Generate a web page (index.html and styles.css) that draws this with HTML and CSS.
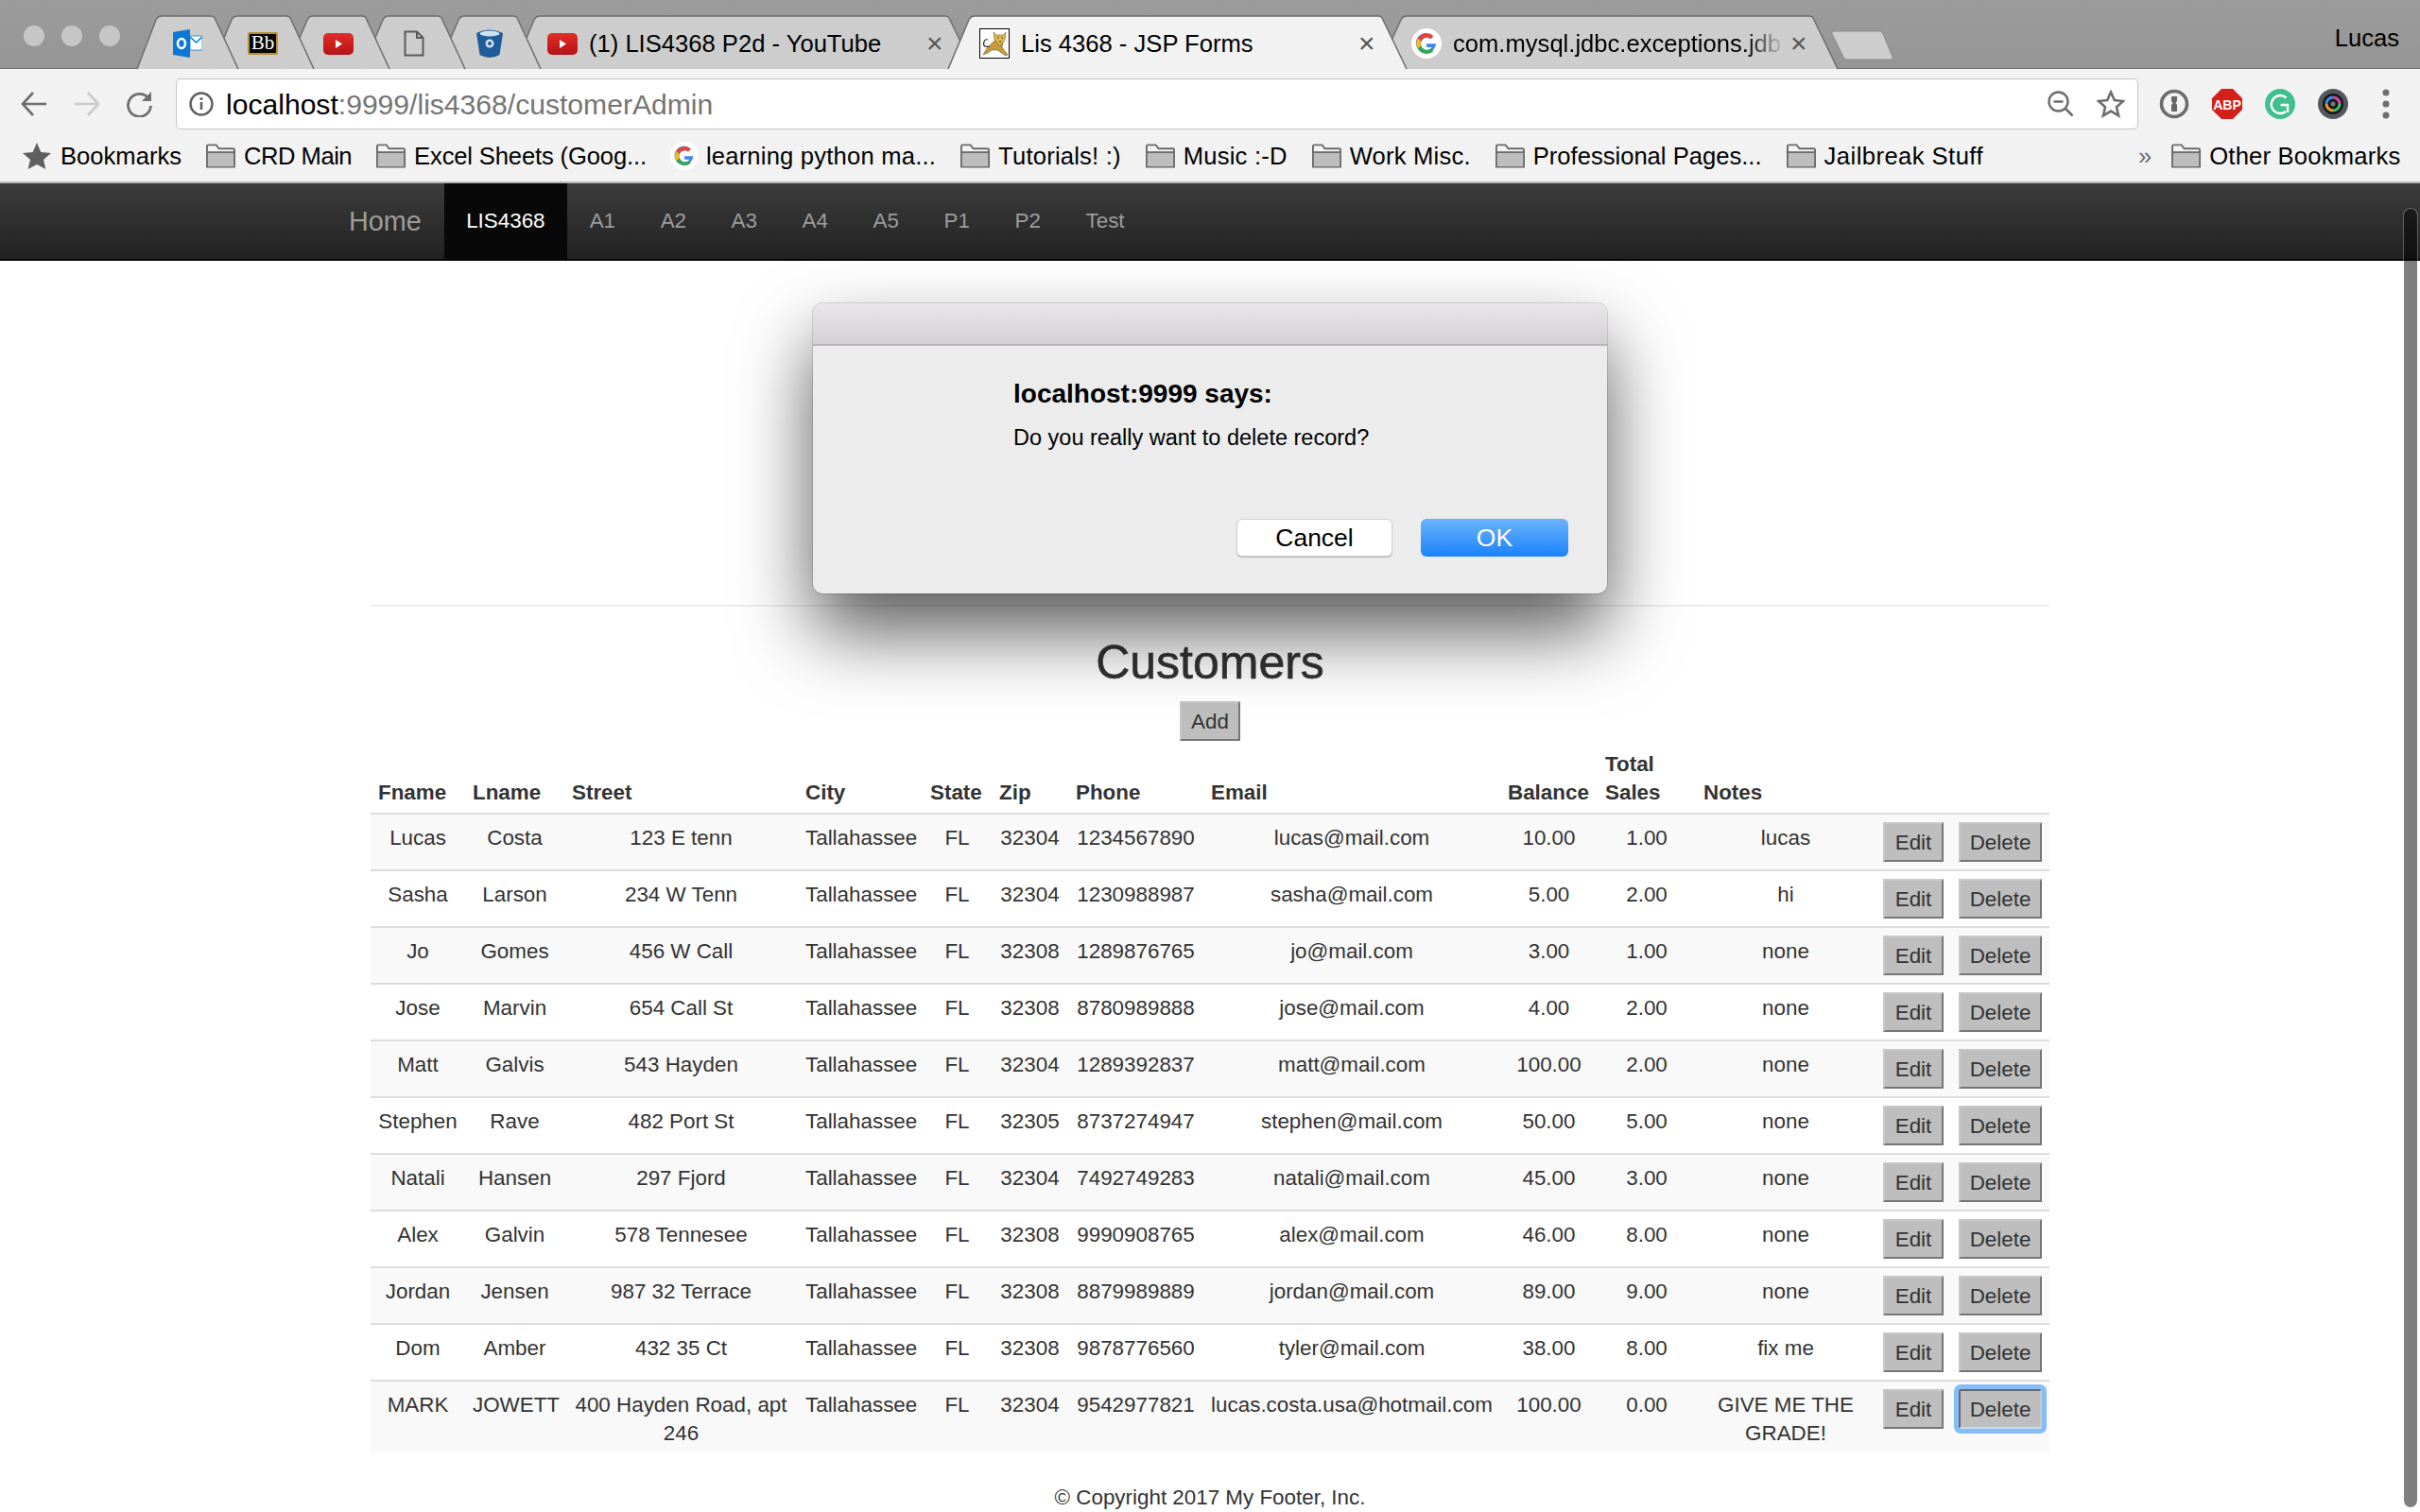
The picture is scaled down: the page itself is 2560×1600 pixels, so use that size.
FILE: index.html
```html
<!DOCTYPE html>
<html lang="en">
<head>
    <meta charset="UTF-8">
    <title>Lis 4368 - JSP Forms</title>
    <link rel="stylesheet" href="styles.css">
</head>
<body>
    <!-- shared icons -->
    <svg class="sprite" width="0" height="0">
        <defs>
            <linearGradient id="yt-red" x1="0" y1="0" x2="0" y2="1">
                <stop offset="0" stop-color="#e52d27"/>
                <stop offset="1" stop-color="#b31217"/>
            </linearGradient>
        </defs>
        <symbol id="folder" viewBox="0 0 32 26">
            <path d="M1 25V2.500Q1 1 2.500 1H11l3 4h15.500Q31 5 31 6.500V25Z" fill="#f4f4f4" stroke="#6b6b6b" stroke-width="2"/>
            <path d="M2 10h28v14H2Z" fill="#bdbdbd"/>
            <path d="M1 9h30" stroke="#6b6b6b" stroke-width="2"/>
        </symbol>
        <symbol id="youtube" viewBox="0 0 32 23">
            <rect width="32" height="23" rx="5" fill="url(#yt-red)"/>
            <path d="M13 7l7 4.500-7 4.500Z" fill="#fff"/>
        </symbol>
        <symbol id="google" viewBox="0 0 32 32">
            <circle cx="16" cy="16" r="16" fill="#fff"/>
            <path d="M26 16.200H16v3.800h5.800A6.400 6.400 0 1 1 20.300 11.200l2.900-2.900A10.600 10.600 0 1 0 26 16.200Z" fill="#4285f4"/>
            <path d="M6.800 10.700A10.600 10.600 0 0 1 23.200 8.300L20.300 11.200A6.400 6.400 0 0 0 10.100 13.800Z" fill="#ea4335"/>
            <path d="M6.800 10.700L10.100 13.800A6.400 6.400 0 0 0 10.100 18.800L6.800 21.300A10.600 10.600 0 0 1 6.800 10.700Z" fill="#fbbc05"/>
            <path d="M6.800 21.300L10.100 18.800A6.400 6.400 0 0 0 20.400 21.500L23.400 24A10.600 10.600 0 0 1 6.800 21.300Z" fill="#34a853"/>
        </symbol>
    </svg>

    <!-- tab strip -->
    <div class="tabstrip">
        <svg class="tab-shapes" width="2560" height="74" viewBox="0 0 2560 74">
            <path class="shape-new" d="M1941 33H1988Q1991 33 1992 36L2002 60Q2003 63 2000 63H1953Q1951 63 1950 60L1938 36Q1937 33 1941 33Z"/>
            <path class="shape" d="M1458 73L1482 21Q1484 17 1488 17H1914Q1918 17 1919 21L1944 73"/>
            <path class="shape" d="M543 73L565 21Q567 17 571 17H1000Q1004 17 1005 21L1030 73"/>
            <path class="shape" d="M463 73L485 21Q487 17 491 17H543Q547 17 548 21L572 73"/>
            <path class="shape" d="M383 73L405 21Q407 17 411 17H463Q467 17 468 21L492 73"/>
            <path class="shape" d="M303 73L325 21Q327 17 331 17H383Q387 17 388 21L412 73"/>
            <path class="shape" d="M223 73L245 21Q247 17 251 17H303Q307 17 308 21L332 73"/>
            <path class="shape" d="M145 73L165 21Q167 17 171 17H223Q227 17 228 21L252 73"/>
            <path class="shape shape-active" d="M1003 73L1025 21Q1027 17 1031 17H1458Q1462 17 1463 21L1488 73"/>
        </svg>
        <div class="traffic">
            <span class="dot"></span><span class="dot"></span><span class="dot"></span>
        </div>
        <div class="tabs">
            <div class="tab-pin">
                <svg class="fav-outlook" viewBox="0 0 31 30">
                    <path d="M18 7h13v15H18Z" fill="#fff" stroke="#0a78d4" stroke-width="0.800"/>
                    <path d="M18 8l6.500 6L31 8" fill="none" stroke="#0a78d4" stroke-width="1.500"/>
                    <path d="M0 3L18 0V30L0 27Z" fill="#0a78d4"/>
                    <ellipse cx="9" cy="15" rx="4" ry="5" fill="none" stroke="#fff" stroke-width="2.600"/>
                </svg>
            </div>
            <div class="tab-pin"><span class="fav-bb">Bb</span></div>
            <div class="tab-pin"><svg class="fav-yt"><use href="#youtube"/></svg></div>
            <div class="tab-pin">
                <svg class="fav-doc" viewBox="0 0 22 28">
                    <path d="M1.500 1.500H14L20.500 8V26.500H1.500Z" fill="none" stroke="#5a5a5a" stroke-width="2"/>
                    <path d="M14 1.500V8H20.500" fill="none" stroke="#5a5a5a" stroke-width="2"/>
                </svg>
            </div>
            <div class="tab-pin">
                <svg class="fav-bucket" viewBox="0 0 28 32">
                    <path d="M0 5Q14 -2 28 5L24.500 28Q14 34 3.500 28Z" fill="#1f5c99"/>
                    <ellipse cx="14" cy="5.500" rx="10.500" ry="3" fill="#cfe0ef"/>
                    <circle cx="14" cy="16" r="4.500" fill="#cfe0ef"/>
                    <circle cx="14" cy="16" r="2" fill="#1f5c99"/>
                </svg>
            </div>
            <div class="tab-wide">
                <svg class="fav-yt"><use href="#youtube"/></svg>
                <span class="tab-title">(1) LIS4368 P2d - YouTube</span>
                <span class="tab-close">×</span>
            </div>
            <div class="tab-wide">
                <svg class="fav-cat" viewBox="0 0 32 32">
                    <rect x="0.500" y="0.500" width="31" height="31" fill="#fff" stroke="#000"/>
                    <path d="M16 13L8 21 4 28 9 26 13 23 19 23 28 29 30 28 24 20 25 14Z" fill="#c99a3a" stroke="#5a4a20" stroke-width="0.500"/>
                    <path d="M15 4L18 7H25L28 4 27 12 22 19 16 12Z" fill="#e0b84e" stroke="#5a4a20" stroke-width="0.500"/>
                    <path d="M19 10h1.500M23.500 10H25M21 14h2" stroke="#333" stroke-width="1.200"/>
                    <path d="M11 19Q3 21 5 14 6 11 9 12" fill="none" stroke="#222" stroke-width="1.200"/>
                </svg>
                <span class="tab-title">Lis 4368 - JSP Forms</span>
                <span class="tab-close">×</span>
            </div>
            <div class="tab-wide">
                <svg class="fav-google"><use href="#google"/></svg>
                <span class="tab-title tab-fade">com.mysql.jdbc.exceptions.jdb</span>
                <span class="tab-close">×</span>
            </div>
        </div>
        <span class="profile">Lucas</span>
    </div>

    <!-- address bar -->
    <div class="toolbar">
        <span class="tool-btn">
            <svg class="tool-icon" viewBox="0 0 30 28"><path d="M28 14H3M14 2L3 14 14 26" fill="none" stroke="#6e6e6e" stroke-width="2.600"/></svg>
        </span>
        <span class="tool-btn">
            <svg class="tool-icon" viewBox="0 0 30 28"><path d="M2 14H27M16 2L27 14 16 26" fill="none" stroke="#cbcbcb" stroke-width="2.600"/></svg>
        </span>
        <span class="tool-btn">
            <svg class="tool-icon" viewBox="0 0 30 28"><path d="M24 8A12 12 0 1 0 26.500 16" fill="none" stroke="#6e6e6e" stroke-width="2.800"/><path d="M27 1V11H17Z" fill="#6e6e6e"/></svg>
        </span>
        <div class="omnibox">
            <svg class="omni-info" viewBox="0 0 26 26">
                <circle cx="13" cy="13" r="11.500" fill="none" stroke="#5f5f5f" stroke-width="2.400"/>
                <path d="M13 11v8" stroke="#5f5f5f" stroke-width="2.600"/>
                <circle cx="13" cy="7.500" r="1.600" fill="#5f5f5f"/>
            </svg>
            <span class="url"><span class="url-host">localhost</span>:9999/lis4368/customerAdmin</span>
            <svg class="omni-zoom" viewBox="0 0 28 28">
                <circle cx="11.500" cy="11.500" r="10" fill="none" stroke="#6e6e6e" stroke-width="2.400"/>
                <path d="M6.500 11.500h10M18.500 18.500l8 8" stroke="#6e6e6e" stroke-width="2.600"/>
            </svg>
            <svg class="omni-star" viewBox="0 0 30 30">
                <path d="M15 2.500l3.800 8.600 9.200.9-7 6.200 2.100 9.200L15 22.600 6.900 27.400 9 18.200 2 12l9.200-.9Z" fill="none" stroke="#6e6e6e" stroke-width="2.600"/>
            </svg>
        </div>
        <div class="extensions">
            <span class="tool-btn">
                <svg class="ext-icon" viewBox="0 0 32 32">
                    <circle cx="16" cy="16" r="13.500" fill="#f2f2f2" stroke="#6b6b6b" stroke-width="3.600"/>
                    <path d="M13 8h6v5l-1.500 2 1.500 2v7h-6v-7l1.500-2-1.500-2Z" fill="#666"/>
                </svg>
            </span>
            <span class="tool-btn">
                <svg class="ext-icon" viewBox="0 0 32 32">
                    <path d="M10 0H22L32 10V22L22 32H10L0 22V10Z" fill="#d4201a"/>
                    <text class="abp-text" x="16" y="21.500" text-anchor="middle">ABP</text>
                </svg>
            </span>
            <span class="tool-btn">
                <svg class="ext-icon" viewBox="0 0 32 32">
                    <circle cx="16" cy="16" r="16" fill="#41bf8f"/>
                    <path d="M22.500 9.500A9.500 9.500 0 1 0 22 24" fill="none" stroke="#fff" stroke-width="2.400"/>
                    <path d="M16.500 17H24V25" fill="none" stroke="#fff" stroke-width="2.400"/>
                </svg>
            </span>
            <span class="tool-btn">
                <svg class="ext-icon" viewBox="0 0 32 32">
                    <circle cx="16" cy="16" r="16" fill="#54575f"/>
                    <circle cx="16" cy="16" r="11" fill="#16181c"/>
                    <circle cx="16" cy="16" r="7" fill="none" stroke="#3ec46d" stroke-width="3" stroke-dasharray="11 33"/>
                    <circle cx="16" cy="16" r="7" fill="none" stroke="#d84aa8" stroke-width="3" stroke-dasharray="11 33" stroke-dashoffset="11"/>
                    <circle cx="16" cy="16" r="7" fill="none" stroke="#3f8fe0" stroke-width="3" stroke-dasharray="11 33" stroke-dashoffset="22"/>
                    <circle cx="16" cy="16" r="7" fill="none" stroke="#e8a030" stroke-width="3" stroke-dasharray="11 33" stroke-dashoffset="33"/>
                    <circle cx="16" cy="16" r="2.500" fill="#777"/>
                </svg>
            </span>
            <span class="tool-btn">
                <svg class="menu-icon" viewBox="0 0 8 32"><circle cx="4" cy="4" r="3.500" fill="#6e6e6e"/><circle cx="4" cy="16" r="3.500" fill="#6e6e6e"/><circle cx="4" cy="28" r="3.500" fill="#6e6e6e"/></svg>
            </span>
        </div>
    </div>

    <!-- bookmarks -->
    <div class="bookmarks">
        <span class="bm bm-first">
            <svg class="bm-star" viewBox="0 0 30 28"><path d="M15 0l4.300 10 10.700 1-8 7.100 2.400 9.900L15 23l-9.400 5L8 18.100 0 11l10.700-1Z" fill="#5f5f5f"/></svg>
            Bookmarks
        </span>
        <span class="bm bm-crd"><svg class="folder"><use href="#folder"/></svg>CRD Main</span>
        <span class="bm bm-excel"><svg class="folder"><use href="#folder"/></svg>Excel Sheets (Goog...</span>
        <span class="bm bm-wide"><svg class="bm-google"><use href="#google"/></svg>learning python ma...</span>
        <span class="bm bm-wide"><svg class="folder"><use href="#folder"/></svg>Tutorials! :)</span>
        <span class="bm bm-wide"><svg class="folder"><use href="#folder"/></svg>Music :-D</span>
        <span class="bm bm-wide"><svg class="folder"><use href="#folder"/></svg>Work Misc.</span>
        <span class="bm"><svg class="folder"><use href="#folder"/></svg>Professional Pages...</span>
        <span class="bm bm-jail"><svg class="folder"><use href="#folder"/></svg>Jailbreak Stuff</span>
        <span class="bm-more">»</span>
        <span class="bm bm-wide"><svg class="folder"><use href="#folder"/></svg>Other Bookmarks</span>
    </div>

    <!-- site navbar -->
    <nav class="navbar">
        <a class="brand">Home</a>
        <a class="nav-link active">LIS4368</a>
        <a class="nav-link">A1</a>
        <a class="nav-link">A2</a>
        <a class="nav-link">A3</a>
        <a class="nav-link">A4</a>
        <a class="nav-link">A5</a>
        <a class="nav-link">P1</a>
        <a class="nav-link">P2</a>
        <a class="nav-link">Test</a>
    </nav>

    <div class="container">
        <hr class="rule">
        <h2 class="title">Customers</h2>
        <div class="add-row"><button class="btn">Add</button></div>

        <table class="customers">
            <colgroup>
                <col class="c-fname"><col class="c-lname"><col class="c-street"><col class="c-city">
                <col class="c-state"><col class="c-zip"><col class="c-phone"><col class="c-email">
                <col class="c-balance"><col class="c-sales"><col class="c-notes"><col class="c-edit"><col class="c-delete">
            </colgroup>
            <thead>
                <tr>
                    <th>Fname</th><th>Lname</th><th>Street</th><th>City</th><th>State</th><th>Zip</th><th>Phone</th>
                    <th>Email</th><th>Balance</th><th>Total Sales</th><th>Notes</th><th></th><th></th>
                </tr>
            </thead>
            <tbody>
                <tr>
                    <td>Lucas</td><td>Costa</td><td>123 E tenn</td><td>Tallahassee</td><td>FL</td><td>32304</td><td>1234567890</td>
                    <td>lucas@mail.com</td><td>10.00</td><td>1.00</td><td>lucas</td>
                    <td><button class="btn">Edit</button></td><td><button class="btn">Delete</button></td>
                </tr>
                <tr>
                    <td>Sasha</td><td>Larson</td><td>234 W Tenn</td><td>Tallahassee</td><td>FL</td><td>32304</td><td>1230988987</td>
                    <td>sasha@mail.com</td><td>5.00</td><td>2.00</td><td>hi</td>
                    <td><button class="btn">Edit</button></td><td><button class="btn">Delete</button></td>
                </tr>
                <tr>
                    <td>Jo</td><td>Gomes</td><td>456 W Call</td><td>Tallahassee</td><td>FL</td><td>32308</td><td>1289876765</td>
                    <td>jo@mail.com</td><td>3.00</td><td>1.00</td><td>none</td>
                    <td><button class="btn">Edit</button></td><td><button class="btn">Delete</button></td>
                </tr>
                <tr>
                    <td>Jose</td><td>Marvin</td><td>654 Call St</td><td>Tallahassee</td><td>FL</td><td>32308</td><td>8780989888</td>
                    <td>jose@mail.com</td><td>4.00</td><td>2.00</td><td>none</td>
                    <td><button class="btn">Edit</button></td><td><button class="btn">Delete</button></td>
                </tr>
                <tr>
                    <td>Matt</td><td>Galvis</td><td>543 Hayden</td><td>Tallahassee</td><td>FL</td><td>32304</td><td>1289392837</td>
                    <td>matt@mail.com</td><td>100.00</td><td>2.00</td><td>none</td>
                    <td><button class="btn">Edit</button></td><td><button class="btn">Delete</button></td>
                </tr>
                <tr>
                    <td>Stephen</td><td>Rave</td><td>482 Port St</td><td>Tallahassee</td><td>FL</td><td>32305</td><td>8737274947</td>
                    <td>stephen@mail.com</td><td>50.00</td><td>5.00</td><td>none</td>
                    <td><button class="btn">Edit</button></td><td><button class="btn">Delete</button></td>
                </tr>
                <tr>
                    <td>Natali</td><td>Hansen</td><td>297 Fjord</td><td>Tallahassee</td><td>FL</td><td>32304</td><td>7492749283</td>
                    <td>natali@mail.com</td><td>45.00</td><td>3.00</td><td>none</td>
                    <td><button class="btn">Edit</button></td><td><button class="btn">Delete</button></td>
                </tr>
                <tr>
                    <td>Alex</td><td>Galvin</td><td>578 Tennesee</td><td>Tallahassee</td><td>FL</td><td>32308</td><td>9990908765</td>
                    <td>alex@mail.com</td><td>46.00</td><td>8.00</td><td>none</td>
                    <td><button class="btn">Edit</button></td><td><button class="btn">Delete</button></td>
                </tr>
                <tr>
                    <td>Jordan</td><td>Jensen</td><td>987 32 Terrace</td><td>Tallahassee</td><td>FL</td><td>32308</td><td>8879989889</td>
                    <td>jordan@mail.com</td><td>89.00</td><td>9.00</td><td>none</td>
                    <td><button class="btn">Edit</button></td><td><button class="btn">Delete</button></td>
                </tr>
                <tr>
                    <td>Dom</td><td>Amber</td><td>432 35 Ct</td><td>Tallahassee</td><td>FL</td><td>32308</td><td>9878776560</td>
                    <td>tyler@mail.com</td><td>38.00</td><td>8.00</td><td>fix me</td>
                    <td><button class="btn">Edit</button></td><td><button class="btn">Delete</button></td>
                </tr>
                <tr>
                    <td>MARK</td><td>JOWETT</td><td>400 Hayden Road, apt 246</td><td>Tallahassee</td><td>FL</td><td>32304</td><td>9542977821</td>
                    <td>lucas.costa.usa@hotmail.com</td><td>100.00</td><td>0.00</td><td>GIVE ME THE GRADE!</td>
                    <td><button class="btn">Edit</button></td><td><button class="btn btn-focus">Delete</button></td>
                </tr>
            </tbody>
        </table>

        <p class="footer">© Copyright 2017 My Footer, Inc.</p>
    </div>

    <!-- overlay scrollbar -->
    <div class="scroll-thumb"></div>

    <!-- javascript confirm dialog -->
    <div class="dialog">
        <div class="dialog-bar"></div>
        <div class="dialog-body">
            <h4 class="dialog-title">localhost:9999 says:</h4>
            <p class="dialog-msg">Do you really want to delete record?</p>
            <div class="dialog-actions">
                <button class="dlg-btn dlg-cancel">Cancel</button>
                <button class="dlg-btn dlg-ok">OK</button>
            </div>
        </div>
    </div>
</body>
</html>
```

FILE: styles.css
```css
* {
    box-sizing: border-box;
}
html, body {
    margin: 0;
    height: 1600px;
    overflow: hidden;
}
body {
    position: relative;
    background: #fff;
    font-family: "Liberation Sans", Arial, sans-serif;
    color: #333;
}
.sprite {
    position: absolute;
}

/* tab strip */
.tabstrip {
    position: relative;
    display: flex;
    height: 73px;
    background: linear-gradient(#9c9c9c, #959595);
    border-bottom: 1px solid #6e6e6e;
    font-size: 25.6px;
    color: #000;
}
.tab-shapes {
    position: absolute;
    left: 0;
    top: 0;
}
.shape {
    fill: #cdcdcd;
    stroke: #6e6e6e;
    stroke-width: 1.5;
}
.shape-active {
    fill: #f2f2f2;
}
.shape-new {
    fill: #cdcdcd;
    stroke: #8a8a8a;
    stroke-width: 1;
}
.traffic {
    position: relative;
    display: flex;
    gap: 18px;
    width: 158px;
    height: 72px;
    padding: 27px 0 0 25px;
}
.dot {
    width: 22px;
    height: 22px;
    border-radius: 50%;
    background: #c6c6c6;
}
.tabs {
    position: relative;
    display: flex;
    height: 72px;
    padding-top: 18px;
}
.tab-pin {
    display: flex;
    align-items: center;
    justify-content: center;
    width: 80px;
    height: 56px;
}
.tab-wide {
    display: flex;
    align-items: center;
    gap: 12px;
    width: 457px;
    height: 56px;
    padding: 0 19px 0 21px;
}
.fav-outlook {
    width: 31px;
    height: 30px;
}
.fav-bb {
    width: 32px;
    height: 24px;
    background: #050505;
    border: 2px solid #b8912f;
    border-radius: 2px;
    color: #fff;
    font-family: "Liberation Serif", serif;
    font-size: 21px;
    line-height: 19px;
    text-align: center;
}
.fav-yt {
    flex: none;
    width: 32px;
    height: 23px;
}
.fav-doc {
    width: 22px;
    height: 28px;
}
.fav-bucket {
    width: 28px;
    height: 32px;
}
.fav-cat, .fav-google {
    flex: none;
    width: 32px;
    height: 32px;
}
.tab-title {
    flex: 1;
    min-width: 0;
    overflow: hidden;
    white-space: nowrap;
}
.tab-fade {
    margin-right: -6px;
    -webkit-mask-image: linear-gradient(to right, #000 88%, transparent);
    mask-image: linear-gradient(to right, #000 88%, transparent);
}
.tab-close {
    flex: none;
    width: 16px;
    color: #555;
    font-size: 30px;
    line-height: 30px;
    text-align: center;
}
.profile {
    position: absolute;
    right: 22px;
    top: 25px;
    line-height: 30px;
}

/* address bar */
.toolbar {
    display: flex;
    height: 64px;
    padding: 10px 8px 0;
    background: #f2f2f2;
}
.tool-btn {
    display: flex;
    align-items: center;
    justify-content: center;
    flex: none;
    width: 56px;
    height: 54px;
}
.tool-icon {
    width: 30px;
    height: 28px;
}
.omnibox {
    display: flex;
    align-items: center;
    flex: none;
    width: 2076px;
    height: 54px;
    margin-left: 10px;
    padding: 0 13px;
    background: #fff;
    border: 1px solid #c4c4c4;
    border-radius: 5px;
}
.omni-info {
    width: 26px;
    height: 26px;
    margin-right: 13px;
}
.url {
    flex: 1;
    padding-top: 2px;
    font-size: 30.1px;
    color: #757575;
}
.url-host {
    color: #000;
}
.omni-zoom {
    width: 28px;
    height: 28px;
    margin-right: 24px;
}
.omni-star {
    width: 30px;
    height: 30px;
}
.extensions {
    display: flex;
    margin-left: 10px;
}
.ext-icon {
    width: 32px;
    height: 32px;
}
.menu-icon {
    width: 8px;
    height: 32px;
}
.abp-text {
    fill: #fff;
    font-family: "Liberation Sans", sans-serif;
    font-size: 14px;
    font-weight: bold;
}

/* bookmarks */
.bookmarks {
    display: flex;
    align-items: center;
    gap: 26px;
    height: 57px;
    padding: 1px 0 0 24px;
    background: #f2f2f2;
    border-bottom: 2px solid #b8b8b8;
    font-size: 25.6px;
    color: #000;
    white-space: nowrap;
}
.bm {
    display: flex;
    align-items: center;
    gap: 9px;
}
.bm-first {
    gap: 10px;
}
.bm-crd {
    letter-spacing: -0.5px;
}
.bm-excel {
    letter-spacing: -0.15px;
}
.bm-wide {
    letter-spacing: 0.2px;
}
.bm-jail {
    letter-spacing: 0.45px;
}
.bm-star {
    width: 30px;
    height: 28px;
}
.folder {
    width: 31px;
    height: 26px;
}
.bm-google {
    width: 30px;
    height: 30px;
    margin-left: -1px;
    margin-right: -1px;
}
.bm-more {
    margin-left: 138px;
    margin-right: -5px;
    color: #6e6e6e;
}

/* navbar */
.navbar {
    display: flex;
    height: 82px;
    padding-left: 345px;
    background: linear-gradient(#3c3c3c, #222);
    border-bottom: 2px solid #080808;
    font-size: 22.4px;
    line-height: 80px;
    color: #9d9d9d;
}
.brand {
    padding: 0 24px;
    font-size: 28.8px;
}
.nav-link {
    padding: 0 23.800px;
}
.active {
    padding: 0 23.300px;
    background: #080808;
    color: #fff;
}

/* page content */
.container {
    width: 1776px;
    margin: 0 auto;
    padding-top: 364px;
    font-size: 22.4px;
    line-height: 30px;
}
.rule {
    height: 2px;
    margin: 0;
    border: 0;
    background: #eee;
}
.title {
    margin: 33px 0 0;
    font-size: 50px;
    font-weight: normal;
    line-height: 53px;
    text-align: center;
    -webkit-text-stroke: 0.6px #333;
}
.add-row {
    margin-top: 14px;
    text-align: center;
}
.btn {
    width: 64px;
    height: 42px;
    padding: 2px 0 0;
    background: #bebebe;
    border: 2px solid;
    border-color: #c8c8c8 #767676 #767676 #c8c8c8;
    color: #333;
    font-family: inherit;
    font-size: 22.4px;
    vertical-align: top;
}
.customers td .btn {
    margin: -1.500px 0 1.500px;
}
.customers td:last-child .btn {
    width: 88px;
}
.customers td:last-child .btn-focus {
    border-color: #666 #c8c8c8 #c8dcf5 #666;
    outline: 5px solid #85bdfb;
    border-radius: 2px;
}
.customers {
    width: 1776px;
    table-layout: fixed;
    border-collapse: separate;
    border-spacing: 0;
}
.customers th {
    padding: 9.500px 8px 6.500px;
    border-bottom: 2px solid #ddd;
    text-align: left;
    vertical-align: bottom;
}
.customers td {
    padding: 9.500px 8px 6.500px;
    border-top: 2px solid #ddd;
    text-align: center;
    vertical-align: top;
}
.customers tbody tr:first-child td {
    border-top: 0;
}
.customers tbody tr:nth-child(odd) {
    background: #f9f9f9;
}
.c-fname { width: 100px; }
.c-lname { width: 105px; }
.c-street { width: 247px; }
.c-city { width: 132px; }
.c-state { width: 73px; }
.c-zip { width: 81px; }
.c-phone { width: 143px; }
.c-email { width: 314px; }
.c-balance { width: 103px; }
.c-sales { width: 104px; }
.c-notes { width: 190px; }
.c-edit { width: 80px; }
.c-delete { width: 104px; }
.footer {
    margin: 32px 0 0;
    line-height: 30px;
    text-align: center;
}

/* scrollbar */
.scroll-thumb {
    position: absolute;
    right: 2px;
    top: 220px;
    width: 16px;
    height: 1376px;
    background: rgba(0,0,0,0.5);
    background-clip: padding-box;
    border: 1px solid rgba(255,255,255,0.25);
    border-radius: 8px;
}

/* dialog */
.dialog {
    position: absolute;
    left: 860px;
    top: 321px;
    width: 840px;
    height: 307px;
    background: #ececec;
    border-radius: 10px;
    box-shadow: 0 0 0 1px rgba(0,0,0,0.12), 0 40px 80px 0 rgba(0,0,0,0.65);
    color: #000;
    overflow: hidden;
}
.dialog-bar {
    height: 45px;
    background: linear-gradient(#e9e7e9, #d2d0d2);
    border-bottom: 2px solid #b5b5b5;
}
.dialog-body {
    padding: 33px 41px 0 212px;
}
.dialog-title {
    margin: 0;
    font-size: 28px;
    line-height: 36px;
}
.dialog-msg {
    margin: 13px 0 0;
    font-size: 23.5px;
    line-height: 30px;
}
.dialog-actions {
    display: flex;
    justify-content: flex-end;
    gap: 30px;
    margin-top: 71px;
}
.dlg-btn {
    height: 40px;
    padding: 0;
    border-radius: 6px;
    font-family: inherit;
    font-size: 26.5px;
    line-height: 36px;
}
.dlg-cancel {
    width: 165px;
    background: #fff;
    border: 1px solid #d0d0d0;
    box-shadow: 0 1px 1px rgba(0,0,0,0.25);
    color: #000;
}
.dlg-ok {
    width: 156px;
    background: linear-gradient(#6cb3fa, #1a82fb);
    border: 0;
    color: #fff;
}
```
